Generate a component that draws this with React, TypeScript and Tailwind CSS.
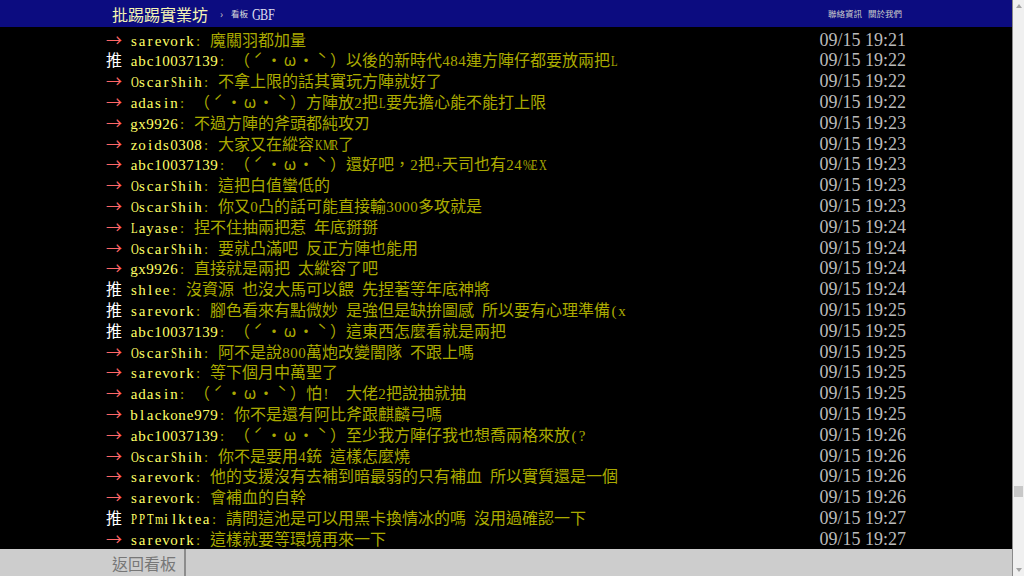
import React from 'react';

type Push = { tag: '推' | '→'; user: string; text: string; time: string };

const pushes: Push[] = [
  { tag: '→', user: 'sarevork', text: '魔關羽都加量', time: '09/15 19:21' },
  { tag: '推', user: 'abc10037139', text: '（ˊ・ω・ˋ）以後的新時代484連方陣仔都要放兩把L', time: '09/15 19:22' },
  { tag: '→', user: 'OscarShih', text: '不拿上限的話其實玩方陣就好了', time: '09/15 19:22' },
  { tag: '→', user: 'adasin', text: '（ˊ・ω・ˋ）方陣放2把L要先擔心能不能打上限', time: '09/15 19:22' },
  { tag: '→', user: 'gx9926', text: '不過方陣的斧頭都純攻刃', time: '09/15 19:23' },
  { tag: '→', user: 'zoids0308', text: '大家又在縱容KMR了', time: '09/15 19:23' },
  { tag: '→', user: 'abc10037139', text: '（ˊ・ω・ˋ）還好吧，2把+天司也有24%EX', time: '09/15 19:23' },
  { tag: '→', user: 'OscarShih', text: '這把白值蠻低的', time: '09/15 19:23' },
  { tag: '→', user: 'OscarShih', text: '你又0凸的話可能直接輸3000多攻就是', time: '09/15 19:23' },
  { tag: '→', user: 'Layase', text: '捏不住抽兩把惹 年底掰掰', time: '09/15 19:24' },
  { tag: '→', user: 'OscarShih', text: '要就凸滿吧 反正方陣也能用', time: '09/15 19:24' },
  { tag: '→', user: 'gx9926', text: '直接就是兩把 太縱容了吧', time: '09/15 19:24' },
  { tag: '推', user: 'shlee', text: '沒資源 也沒大馬可以餵 先捏著等年底神將', time: '09/15 19:24' },
  { tag: '推', user: 'sarevork', text: '腳色看來有點微妙 是強但是缺拚圖感 所以要有心理準備(x', time: '09/15 19:25' },
  { tag: '推', user: 'abc10037139', text: '（ˊ・ω・ˋ）這東西怎麼看就是兩把', time: '09/15 19:25' },
  { tag: '→', user: 'OscarShih', text: '阿不是說800萬炮改變闇隊 不跟上嗎', time: '09/15 19:25' },
  { tag: '→', user: 'sarevork', text: '等下個月中萬聖了', time: '09/15 19:25' },
  { tag: '→', user: 'adasin', text: '（ˊ・ω・ˋ）怕!  大佬2把說抽就抽', time: '09/15 19:25' },
  { tag: '→', user: 'blackone979', text: '你不是還有阿比斧跟麒麟弓嗎', time: '09/15 19:25' },
  { tag: '→', user: 'abc10037139', text: '（ˊ・ω・ˋ）至少我方陣仔我也想喬兩格來放(?', time: '09/15 19:26' },
  { tag: '→', user: 'OscarShih', text: '你不是要用4銃 這樣怎麼燒', time: '09/15 19:26' },
  { tag: '→', user: 'sarevork', text: '他的支援沒有去補到暗最弱的只有補血 所以實質還是一個', time: '09/15 19:26' },
  { tag: '→', user: 'sarevork', text: '會補血的自幹', time: '09/15 19:26' },
  { tag: '推', user: 'PPTmilktea', text: '請問這池是可以用黑卡換情冰的嗎 沒用過確認一下', time: '09/15 19:27' },
  { tag: '→', user: 'sarevork', text: '這樣就要等環境再來一下', time: '09/15 19:27' },
];

// big5 terminal cells: wide glyphs take 2 cells (16px), latin takes 1 (8px)
const WIDE = /[\u02ca\u02cb\u03c9\u2190-\u21ff\u2e80-\u9fff\u3000-\u30ff\uff00-\uffef]/;
// latin glyphs too fat for one cell, squeezed like the bitmap font does
const FAT = /[A-HK-Zmw%@]/;

function BbsText({ text }: { text: string }) {
  return (
    <>
      {Array.from(text).map((ch, i) => {
        if (WIDE.test(ch)) {
          return (
            <span key={i} className="inline-block w-[16px] text-center text-[16px]">
              {ch}
            </span>
          );
        }
        if (FAT.test(ch)) {
          return (
            <span key={i} className="inline-block w-[8px] scale-x-[0.72] text-center font-['Liberation_Serif',serif] text-[15px]">
              {ch}
            </span>
          );
        }
        return (
          <span key={i} className="inline-block w-[8px] text-center font-['Liberation_Serif',serif] text-[15px]">
            {ch}
          </span>
        );
      })}
    </>
  );
}

function PushRow({ p }: { p: Push }) {
  return (
    <div className="flex h-[20.8px] items-center leading-[20.8px] whitespace-pre">
      <span className={p.tag === '推' ? 'text-white' : 'text-[#f66]'}>
        <BbsText text={p.tag + ' '} />
      </span>
      <span className="text-[#ff6]">
        <BbsText text={p.user} />
      </span>
      <span className="text-[#aa0]">
        <BbsText text={': ' + p.text} />
      </span>
      <span className="ml-auto font-['Liberation_Serif',serif] text-[18px] text-[#bbb]">{p.time}</span>
    </div>
  );
}

function Scrollbar() {
  return (
    <div className="flex w-[12px] flex-col border-l border-[#8a8a8a] bg-[#f0f0f0]">
      <div className="flex h-[12px] items-center justify-center">
        <svg width="6" height="4" viewBox="0 0 6 4">
          <path d="M3 0 L6 4 L0 4 Z" fill="#a3a3a3" />
        </svg>
      </div>
      <div className="flex-1">
        <div className="mx-[1px] mt-[474px] h-[11px] bg-[#c8c8c8]" />
      </div>
      <div className="flex h-[12px] items-center justify-center">
        <svg width="6" height="4" viewBox="0 0 6 4">
          <path d="M0 0 L6 0 L3 4 Z" fill="#a3a3a3" />
        </svg>
      </div>
    </div>
  );
}

export default function App() {
  return (
    <div className="flex h-[576px] w-[1024px] overflow-hidden font-['Noto_Sans_CJK_TC',sans-serif]">
      <div className="flex w-[1012px] flex-col">
        <div className="h-[27px] bg-[#0c0c80]">
          <div className="mx-auto flex h-full w-[800px] items-center pl-[6px] pr-[4px]">
            <span className="text-[16px] leading-none text-[#f5f5b4]">批踢踢實業坊</span>
            <span className="ml-[12px] text-[10px] text-[#ccc]">›</span>
            <span className="ml-[8px] text-[8.5px] text-[#ddd]">看板</span>
            <span className="ml-[3px] text-[17px] text-[#dde]">
              <span className="inline-block w-[8px] scale-x-[0.72] text-center font-['Liberation_Serif',serif]">G</span>
              <span className="inline-block w-[8px] scale-x-[0.72] text-center font-['Liberation_Serif',serif]">B</span>
              <span className="inline-block w-[8px] scale-x-[0.72] text-center font-['Liberation_Serif',serif]">F</span>
            </span>
            <div className="ml-auto flex gap-[6px] text-[8.5px] text-[#ccc]">
              <span>聯絡資訊</span>
              <span>關於我們</span>
            </div>
          </div>
        </div>
        <div className="flex-1 overflow-hidden bg-black">
          <div className="mx-auto w-[800px] pt-[2.6px]">
            {pushes.map((p, i) => (
              <PushRow key={i} p={p} />
            ))}
          </div>
        </div>
        <div className="h-[27px] bg-[#cdcdcd]">
          <div className="mx-auto flex h-full w-[800px]">
            <div className="flex h-full items-center border-r-2 border-[#8c8c8c] pl-[6px] pr-[8px] text-[16px] text-[#777]">
              返回看板
            </div>
          </div>
        </div>
      </div>
      <Scrollbar />
    </div>
  );
}
